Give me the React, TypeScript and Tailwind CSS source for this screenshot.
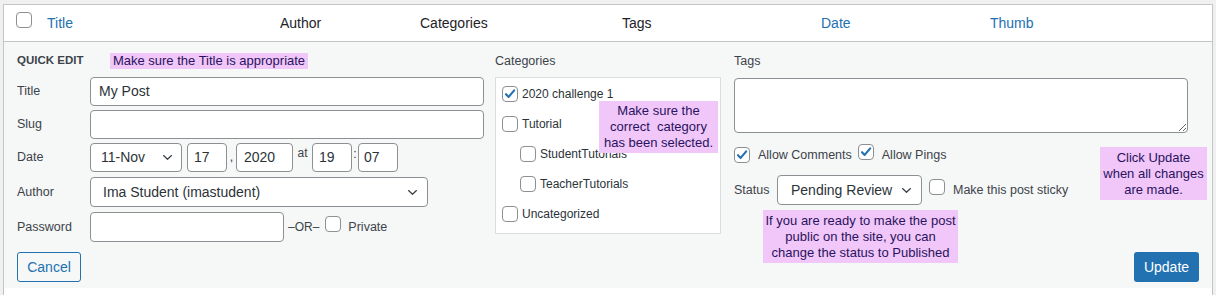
import React from "react";

const Check = ({ checked = false, size = 16 }: { checked?: boolean; size?: number }) => (
  <span
    className="inline-flex shrink-0 items-center justify-center rounded-[4px] border border-[#8c8f94] bg-white"
    style={{ width: size, height: size }}
  >
    {checked && (
      <svg viewBox="0 0 20 20" className="h-[16px] w-[16px]">
        <path d="M4.3 10.3l3.8 3.9L16 4.8" fill="none" stroke="#2271b1" strokeWidth="3" strokeLinecap="round" strokeLinejoin="round" />
      </svg>
    )}
  </span>
);

const Chevron = () => (
  <svg viewBox="0 0 12 8" className="h-[7px] w-[11px] shrink-0">
    <path d="M1.5 1.8L6 6l4.5-4.2" fill="none" stroke="#3c434a" strokeWidth="1.5" strokeLinecap="round" strokeLinejoin="round" />
  </svg>
);

const Box = ({ w, children, className = "" }: { w: string; children?: React.ReactNode; className?: string }) => (
  <div className={`flex h-full items-center rounded-[4px] border border-[#8c8f94] bg-white text-[14px] text-[#2c3338] ${w} ${className}`}>
    {children}
  </div>
);

const Note = ({ children, className = "" }: { children: React.ReactNode; className?: string }) => (
  <div className={`bg-[#f0c7f8] text-center text-[13px] leading-[16px] text-[#2a1260] ${className}`}>{children}</div>
);

export default function App() {
  return (
    <div className="min-h-screen bg-[#f0f0f1] px-[3px] pt-[4px] font-['Liberation_Sans',Arial,sans-serif]">
      <div className="border border-[#c3c4c7] bg-white">
        {/* header */}
        <div className="grid h-[37px] grid-cols-[43px_233px_140px_202px_199px_169px_1fr] items-center border-b border-[#c3c4c7] text-[14px] text-[#1d2327]">
          <div className="pl-[12px]">
            <Check size={16} />
          </div>
          <div className="text-[#2271b1]">Title</div>
          <div>Author</div>
          <div>Categories</div>
          <div>Tags</div>
          <div className="text-[#2271b1]">Date</div>
          <div className="text-[#2271b1]">Thumb</div>
        </div>

        {/* quick edit row */}
        <div className="relative flex h-[246px] bg-[#f6f7f7] pl-[13px] pr-[13px] text-[12.5px] text-[#3c434a]">
          {/* left column */}
          <div className="flex w-[467px] flex-col">
            <div className="mt-[11px] flex h-[16px] items-center">
              <span className="w-[93px] whitespace-nowrap text-[11.5px] font-bold text-[#3c434a]">QUICK EDIT</span>
              <Note className="w-[198px] leading-[16px]">Make sure the Title is appropriate</Note>
            </div>
            <div className="mt-[8px] flex h-[29px] items-center">
              <span className="w-[73px]">Title</span>
              <Box w="flex-1" className="pl-[8px]">My Post</Box>
            </div>
            <div className="mt-[4px] flex h-[29px] items-center">
              <span className="w-[73px]">Slug</span>
              <Box w="flex-1" />
            </div>
            <div className="mt-[4px] flex h-[29px] items-center">
              <span className="w-[73px]">Date</span>
              <Box w="w-[92px]" className="justify-between pl-[10px] pr-[8px]">
                <span>11-Nov</span>
                <Chevron />
              </Box>
              <div className="ml-[5px] h-full">
                <Box w="w-[40px]" className="pl-[6px]">17</Box>
              </div>
              <span className="w-[9px] text-center">,</span>
              <div className="h-full">
                <Box w="w-[57px]" className="pl-[7px]">2020</Box>
              </div>
              <span className="mb-[10px] w-[19px] text-center text-[12px]">at</span>
              <div className="h-full">
                <Box w="w-[40px]" className="pl-[6px]">19</Box>
              </div>
              <span className="mb-[6px] w-[6px] text-center">:</span>
              <div className="h-full">
                <Box w="w-[40px]" className="pl-[5px]">07</Box>
              </div>
            </div>
            <div className="mt-[5px] flex h-[30px] items-center">
              <span className="w-[73px]">Author</span>
              <Box w="w-[338px]" className="justify-between pl-[12px] pr-[9px]">
                <span>Ima Student (imastudent)</span>
                <Chevron />
              </Box>
            </div>
            <div className="mt-[5px] flex h-[30px] items-center">
              <span className="w-[73px]">Password</span>
              <Box w="w-[194px]" />
              <span className="ml-[4px] text-[12px]">–OR–</span>
              <span className="ml-[6px]">
                <Check />
              </span>
              <span className="ml-[7px]">Private</span>
            </div>
            <div className="mt-[10px]">
              <button className="h-[30px] w-[64px] rounded-[3px] border border-[#2271b1] bg-[#f6f7f7] text-[14px] text-[#2271b1]">
                Cancel
              </button>
            </div>
          </div>

          {/* categories column */}
          <div className="ml-[11px] flex w-[226px] flex-col">
            <div className="mt-[11px] flex h-[16px] items-center">Categories</div>
            <div className="relative mt-[8px] h-[157px] border border-[#dcdcde] bg-white pt-[1px] text-[12px] text-[#2c3338]">
              {[
                { t: "2020 challenge 1", c: true, i: false },
                { t: "Tutorial", c: false, i: false },
                { t: "StudentTutorials", c: false, i: true },
                { t: "TeacherTutorials", c: false, i: true },
                { t: "Uncategorized", c: false, i: false },
              ].map((r) => (
                <div key={r.t} className={`flex h-[30px] items-center gap-[4px] ${r.i ? "pl-[24px]" : "pl-[6px]"}`}>
                  <Check checked={r.c} />
                  <span>{r.t}</span>
                </div>
              ))}
              <Note className="absolute left-[103px] top-[23px] flex h-[52px] w-[119px] flex-col justify-center">
                <span>Make sure the</span>
                <span>correct&nbsp; category</span>
                <span>has been selected.</span>
              </Note>
            </div>
          </div>

          {/* tags column */}
          <div className="ml-[13px] flex flex-1 flex-col">
            <div className="mt-[11px] flex h-[16px] items-center">Tags</div>
            <textarea
              readOnly
              className="mt-[9px] h-[55px] w-[454px] rounded-[4px] border border-[#8c8f94] bg-white outline-none"
            />
            <div className="mt-[12px] flex h-[20px] items-center">
              <Check checked />
              <span className="ml-[8px]">Allow Comments</span>
              <span className="ml-[6px]">
                <Check checked />
              </span>
              <span className="ml-[8px]">Allow Pings</span>
            </div>
            <div className="mt-[10px] flex h-[30px] items-center">
              <span className="w-[43px]">Status</span>
              <Box w="w-[145px]" className="justify-between pl-[13px] pr-[9px]">
                <span>Pending Review</span>
                <Chevron />
              </Box>
              <span className="ml-[7px]">
                <Check />
              </span>
              <span className="ml-[8px]">Make this post sticky</span>
            </div>
            <div className="mt-[5px] flex h-[72px] items-start justify-between">
              <Note className="ml-[29px] flex h-[53px] w-[195px] flex-col justify-center">
                <span>If you are ready to make the post</span>
                <span>public on the site, you can</span>
                <span>change the status to Published</span>
              </Note>
              <button className="h-[30px] w-[65px] self-end rounded-[3px] bg-[#2271b1] text-[14px] text-white">Update</button>
            </div>
          </div>

          <Note className="absolute right-[5px] top-[105px] flex h-[53px] w-[107px] flex-col justify-center">
            <span>Click Update</span>
            <span>when all changes</span>
            <span>are made.</span>
          </Note>
        </div>
        <div className="h-[20px] bg-white" />
      </div>
    </div>
  );
}
